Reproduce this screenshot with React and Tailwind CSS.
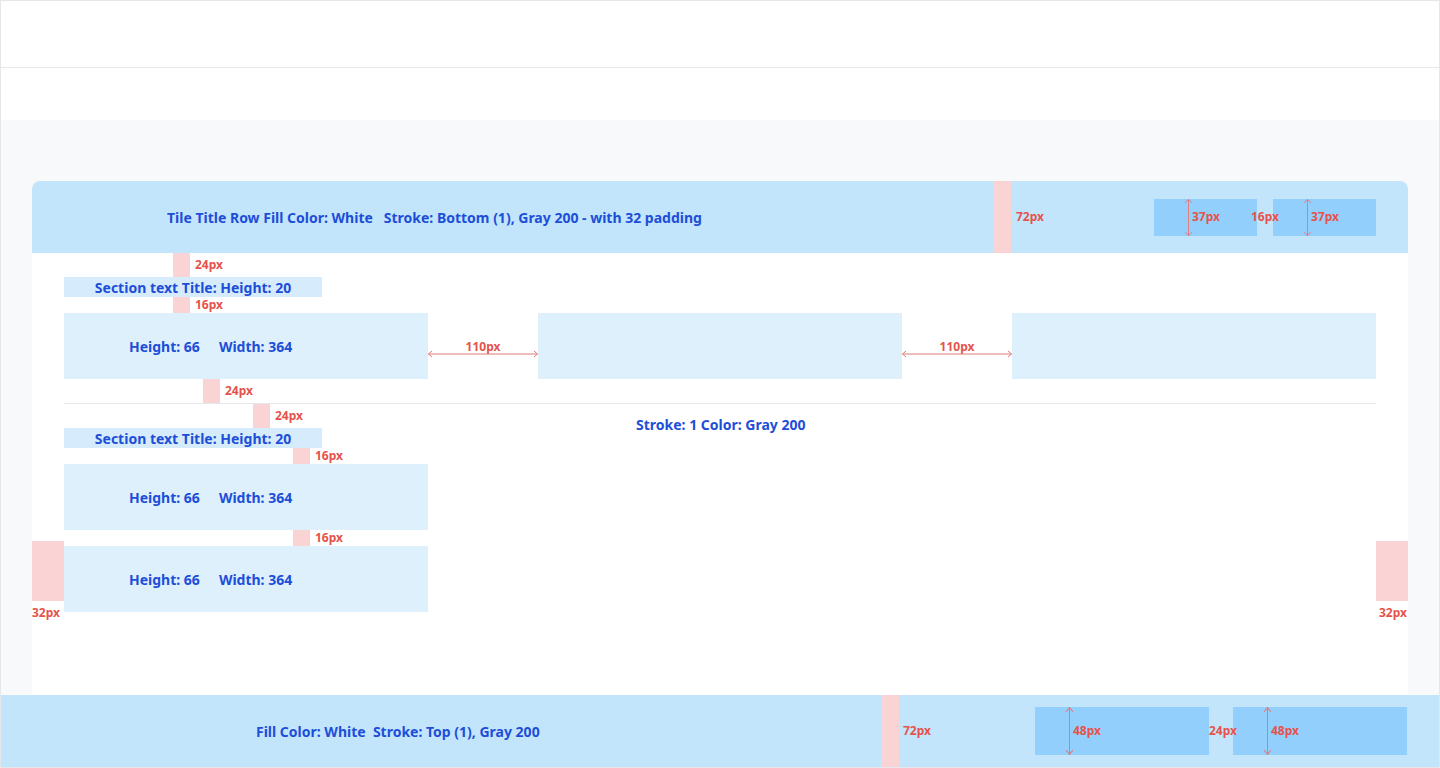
import React from "react";

const Marker = ({ className, label, labelClass = "left-[22px] top-1/2 -translate-y-1/2" }) => (
  <div className={`absolute bg-[#fad4d4] ${className}`}>
    <span className={`absolute whitespace-nowrap text-[12px] font-bold text-[#e5534b] ${labelClass}`}>{label}</span>
  </div>
);

const VArrow = () => (
  <svg width="9" height="100%" viewBox="0 0 9 40" preserveAspectRatio="none" className="h-full">
    <path d="M4.5 0.5V39.5M1 4L4.5 0.5L8 4M1 36L4.5 39.5L8 36" stroke="#e07b7b" strokeWidth="1" fill="none" />
  </svg>
);

const MeasureBox = ({ w, h, label }) => (
  <div className={`relative flex items-center bg-[#93cffd] ${w} ${h}`}>
    <div className="absolute left-[30px] top-0 h-full"><VArrow /></div>
    <span className="ml-[38px] text-[12px] font-bold text-[#e5534b]">{label}</span>
  </div>
);

const Card = ({ text = true }) => (
  <div className="flex h-[66px] w-[364px] items-center bg-[#dff0fd] pl-[65px] text-[14px] font-bold text-[#1d4ed8]">
    {text && (
      <>
        <span>Height: 66</span>
        <span className="ml-[19px]">Width: 364</span>
      </>
    )}
  </div>
);

const Gap = () => (
  <div className="relative w-[110px]">
    <span className="absolute left-1/2 top-[25px] -translate-x-1/2 text-[12px] font-bold text-[#e5534b]">110px</span>
    <svg className="absolute left-0 top-[37px]" width="110" height="8" viewBox="0 0 110 8">
      <path d="M0.5 4H109.5M4 1L0.5 4L4 7M106 1L109.5 4L106 7" stroke="#e07b7b" fill="none" />
    </svg>
  </div>
);

const SectionTitle = () => (
  <div className="flex h-5 w-[258px] items-center justify-center bg-[#d6ecfc] text-[14px] font-bold text-[#1d4ed8]">
    Section text Title: Height: 20
  </div>
);

export default function App() {
  return (
    <div className="flex h-[768px] w-[1440px] flex-col overflow-hidden border border-gray-200 bg-white font-['Inter',sans-serif]">
      <div className="h-[67px] shrink-0 border-b border-gray-200" />
      <div className="h-[52px] shrink-0" />
      <div className="flex-1 bg-[#f8f9fb] px-[31px] pt-[61px]">
        <div className="h-full overflow-hidden rounded-t-lg bg-white">
          {/* title row */}
          <div className="relative flex h-[72px] items-center bg-[#c2e5fc] pl-[135px] pr-8">
            <span className="text-[14px] font-bold text-[#1d4ed8]">
              Tile Title Row Fill Color: White&nbsp;&nbsp;&nbsp;Stroke: Bottom (1), Gray 200 - with 32 padding
            </span>
            <Marker className="left-[962px] top-0 h-full w-[17px]" label="72px" />
            <div className="ml-auto flex gap-4">
              <MeasureBox w="w-[103px]" h="h-[37px]" label="37px" />
              <MeasureBox w="w-[103px]" h="h-[37px]" label="37px" />
            </div>
            <span className="absolute left-[1219px] top-1/2 -translate-y-1/2 text-[12px] font-bold text-[#e5534b]">16px</span>
          </div>

          {/* body */}
          <div className="relative px-8 pt-6">
            <Marker className="left-[141px] top-0 h-6 w-[17px]" label="24px" />
            <Marker className="left-[141px] top-[44px] h-4 w-[17px]" label="16px" />
            <Marker className="left-[171px] top-[126px] h-6 w-[17px]" label="24px" />
            <Marker className="left-[221px] top-[151px] h-6 w-[17px]" label="24px" />
            <Marker className="left-[261px] top-[195px] h-4 w-[17px]" label="16px" />
            <Marker className="left-[261px] top-[277px] h-4 w-[17px]" label="16px" />
            <Marker className="left-0 top-[288px] h-[60px] w-8" label="32px" labelClass="left-0 top-[63px]" />
            <Marker className="left-[1344px] top-[288px] h-[60px] w-8" label="32px" labelClass="left-[3px] top-[63px]" />

            <SectionTitle />
            <div className="mt-4 flex">
              <Card />
              <Gap />
              <Card text={false} />
              <Gap />
              <Card text={false} />
            </div>
            <div className="mt-6 border-t border-gray-200 pt-6">
              <div className="relative">
                <span className="absolute left-[572px] top-[-14px] text-[14px] font-bold text-[#1d4ed8]">
                  Stroke: 1 Color: Gray 200
                </span>
                <SectionTitle />
              </div>
              <div className="mt-4 flex flex-col gap-4">
                <Card />
                <Card />
              </div>
            </div>
          </div>
        </div>
      </div>

      {/* bottom bar */}
      <div className="relative flex h-[72px] shrink-0 items-center bg-[#c2e5fc] pl-[255px] pr-8">
        <span className="text-[14px] font-bold text-[#1d4ed8]">
          Fill Color: White&nbsp;&nbsp;Stroke: Top (1), Gray 200
        </span>
        <Marker className="left-[880px] top-0 h-full w-[18px]" label="72px" />
        <div className="ml-auto flex gap-6">
          <MeasureBox w="w-[174px]" h="h-12" label="48px" />
          <MeasureBox w="w-[174px]" h="h-12" label="48px" />
        </div>
        <span className="absolute left-[1208px] top-1/2 -translate-y-1/2 text-[12px] font-bold text-[#e5534b]">24px</span>
      </div>
    </div>
  );
}
